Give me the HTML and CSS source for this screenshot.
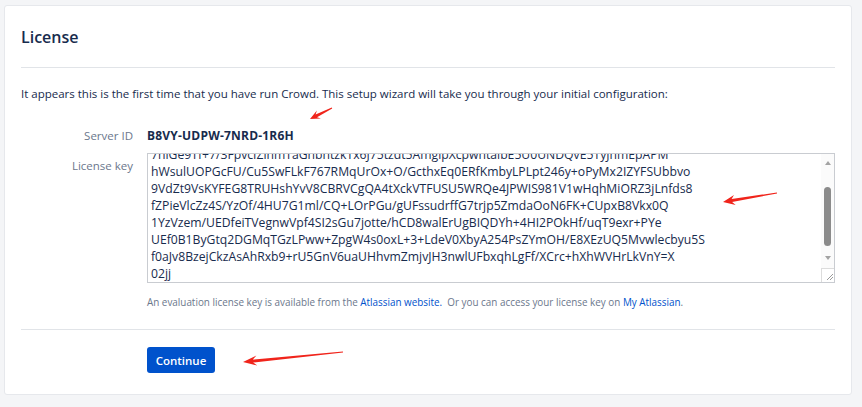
FILE: index.html
```html
<!DOCTYPE html>
<html>
<head>
<meta charset="utf-8">
<link rel="stylesheet" href="styles.css">
</head>
<body>
<div class="page">
  <div class="card">
    <div class="card-header"><h1 class="title">License</h1></div>
    <p class="intro">It appears this is the first time that you have run Crowd. This setup wizard will take you through your initial configuration:</p>
    <div class="form">
      <div class="label">Server ID</div>
      <div class="server-id">B8VY-UDPW-7NRD-1R6H</div>
      <div class="label label-key">License key</div>
      <div class="field">
        <div class="textbox">
          <div class="textbox-text">
            <div>7hlGe9Tf+7/3FpvcIZlnmTaGhbhtzkTx6J75tzdt5AmgipXcpwntaibE5U0UNDQvE5TyJnmEpAPM</div>
            <div>hWsulUOPGcFU/Cu5SwFLkF767RMqUrOx+O/GcthxEq0ERfKmbyLPLpt246y+oPyMx2IZYFSUbbvo</div>
            <div>9VdZt9VsKYFEG8TRUHshYvV8CBRVCgQA4tXckVTFUSU5WRQe4JPWIS981V1wHqhMiORZ3jLnfds8</div>
            <div>fZPieVlcZz4S/YzOf/4HU7G1ml/CQ+LOrPGu/gUFssudrffG7trjp5ZmdaOoN6FK+CUpxB8Vkx0Q</div>
            <div>1YzVzem/UEDfeiTVegnwVpf4SI2sGu7jotte/hCD8walErUgBIQDYh+4HI2POkHf/uqT9exr+PYe</div>
            <div>UEf0B1ByGtq2DGMqTGzLPww+ZpgW4s0oxL+3+LdeV0XbyA254PsZYmOH/E8XEzUQ5Mvwlecbyu5S</div>
            <div>f0aJv8BzejCkzAsAhRxb9+rU5GnV6uaUHhvmZmjvJH3nwlUFbxqhLgFf/XCrc+hXhWVHrLkVnY=X</div>
            <div>02jj</div>
          </div>
          <div class="scrollbar">
            <div class="sb-up"></div>
            <div class="sb-track"><div class="sb-thumb"></div></div>
            <div class="sb-down"></div>
            <div class="sb-corner">
              <svg width="13" height="13" viewBox="0 0 13 13"><path d="M11 5 L5 11 M11 8 L8 11" stroke="#9a9a9a" stroke-width="1"/></svg>
            </div>
          </div>
        </div>
        <p class="help">An evaluation license key is available from the <a class="link">Atlassian website.</a>&nbsp; Or you can access your license key on <a class="link">My Atlassian</a>.</p>
      </div>
    </div>
    <div class="card-footer">
      <button class="btn">Continue</button>
    </div>
  </div>
  <svg class="annot" width="862" height="407" viewBox="0 0 862 407">
    <polygon fill="#f0241b" points="332.2,108.4 317,117.2 320.9,118.5 310,119 316.9,110.5 315.6,114.6 331.8,107.6"/>
    <polygon fill="#f0241b" points="777.1,193.5 732.1,202 735.7,204.9 723,202 734,195.1 731.6,199 776.9,192.5"/>
    <polygon fill="#f0241b" points="343.05,352.5 253.1,362.5 257.4,365.6 243,362 256.4,355.6 252.8,359.5 342.95,351.5"/>
  </svg>
</div>
</body>
</html>
```
FILE: styles.css
```css
html, body {
  margin: 0;
  padding: 0;
  background: #f4f5f7;
}
body {
  font-family: "Open Sans", "Noto Sans", "Liberation Sans", sans-serif;
  color: #172b4d;
  font-size: 11.5px;
}
.page {
  position: relative;
  width: 862px;
  height: 407px;
  padding: 5px 10px 0 4px;
  box-sizing: border-box;
}
.card {
  background: #fff;
  border: 1px solid #e6e8ec;
  border-radius: 3px;
  padding: 0 16px 20px 16px;
  box-sizing: border-box;
  height: 390px;
}
.card-header {
  padding-top: 19px;
  padding-bottom: 18px;
  border-bottom: 1px solid #e1e4e8;
}
.title {
  margin: 0;
  font-size: 16px;
  line-height: 24px;
  font-weight: 600;
  color: #172b4d;
}
.intro {
  margin: 17px 0 0 0;
  line-height: 18px;
  font-size: 11.5px;
}
.form {
  display: grid;
  grid-template-columns: 112px 688px;
  column-gap: 14px;
  row-gap: 8px;
  margin-top: 24px;
}
.label {
  text-align: right;
  color: #6b778c;
  line-height: 18px;
}
.label-key {
  padding-top: 4px;
}
.server-id {
  font-weight: 700;
  font-size: 12px;
  line-height: 18px;
  letter-spacing: 0.2px;
}
.field {
  display: flex;
  flex-direction: column;
}
.textbox {
  display: flex;
  height: 130px;
  border: 1px solid #c9ccd1;
  box-sizing: border-box;
  overflow: hidden;
}
.textbox-text {
  flex: 1;
  margin-top: -8px;
  padding-left: 3px;
  line-height: 17px;
  font-size: 12.2px;
  white-space: nowrap;
  overflow: hidden;
}
.scrollbar {
  width: 13px;
  display: flex;
  flex-direction: column;
  background: #fbfbfb;
}
.sb-up, .sb-down {
  height: 17px;
  display: flex;
  align-items: center;
  justify-content: center;
}
.sb-up::before {
  content: "";
  border-left: 3.5px solid transparent;
  border-right: 3.5px solid transparent;
  border-bottom: 4px solid #a3a3a3;
}
.sb-down::before {
  content: "";
  border-left: 3.5px solid transparent;
  border-right: 3.5px solid transparent;
  border-top: 4px solid #a3a3a3;
}
.sb-track {
  height: 78px;
  display: flex;
  justify-content: center;
  padding-top: 16px;
  box-sizing: border-box;
}
.sb-thumb {
  width: 7px;
  height: 59px;
  border-radius: 4px;
  background: #8b8b8b;
}
.sb-corner {
  margin-top: auto;
  height: 13px;
  border-top: 1px solid #dcdcdc;
  border-left: 1px solid #dcdcdc;
  background: #fff;
}
.sb-corner svg {
  display: block;
}
.help {
  margin: 12px 0 0 0;
  font-size: 9.9px;
  line-height: 14px;
  color: #6b778c;
}
.link {
  color: #0052cc;
  text-decoration: none;
}
.card-footer {
  margin-top: 20px;
  border-top: 1px solid #e1e4e8;
  padding-top: 17px;
  padding-left: 126px;
}
.btn {
  background: #0052cc;
  color: #fff;
  border: none;
  border-radius: 3px;
  height: 26px;
  width: 68px;
  padding: 0;
  font-family: "Open Sans", "Noto Sans", "Liberation Sans", sans-serif;
  font-weight: 600;
  font-size: 11.5px;
}
.annot {
  position: absolute;
  left: 0;
  top: 0;
  pointer-events: none;
}
```
